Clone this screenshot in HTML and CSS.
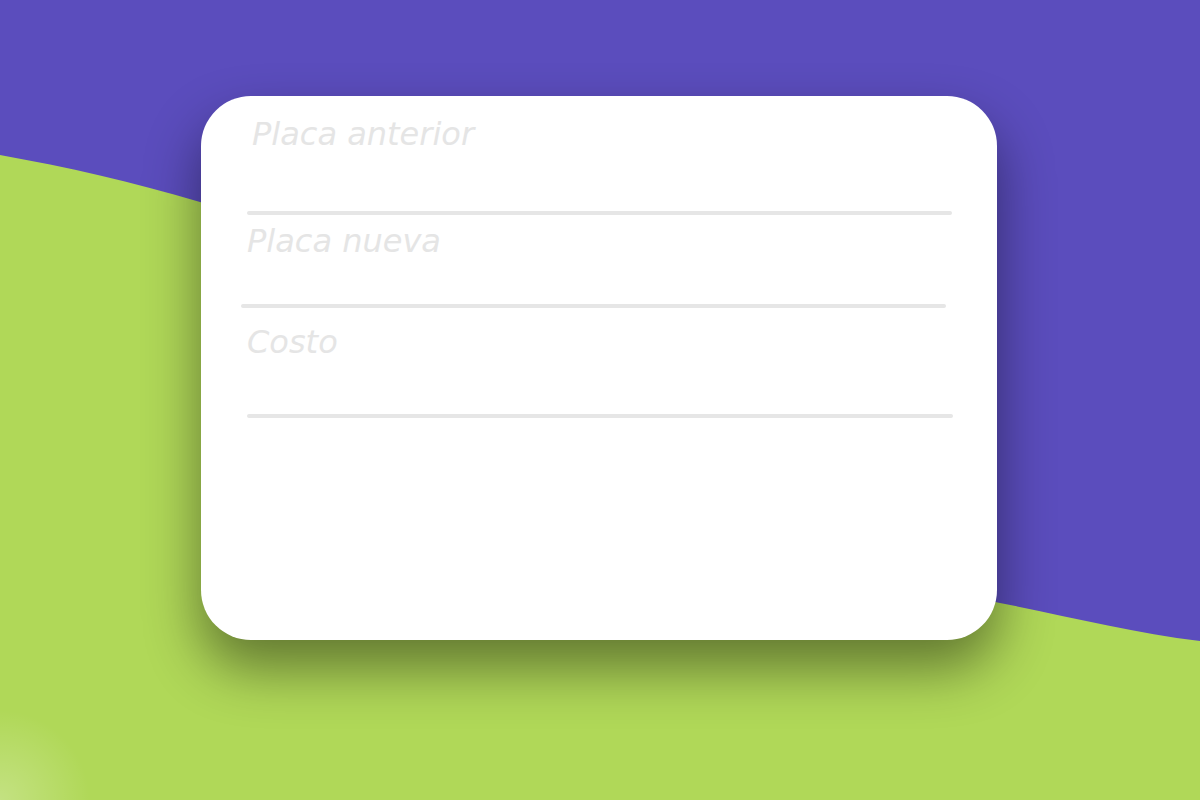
FILE: index.html
```html
<!DOCTYPE html>
<html lang="es">
<head>
<meta charset="utf-8">
<title>Placa</title>
<link rel="stylesheet" href="styles.css">
</head>
<body>
<svg class="backdrop" viewBox="0 0 1200 800" preserveAspectRatio="none" aria-hidden="true">
  <defs>
    <radialGradient id="glow" cx="0" cy="800" r="90" gradientUnits="userSpaceOnUse">
      <stop offset="0" stop-color="#ffffff" stop-opacity="0.25"/>
      <stop offset="1" stop-color="#ffffff" stop-opacity="0"/>
    </radialGradient>
  </defs>
  <rect x="0" y="0" width="1200" height="800" fill="#5b4dbd"/>
  <path d="M0,155 C67,167 133,182 200,202 C400,262 800,565 1000,603 C1067,616 1133,633 1200,641 L1200,800 L0,800 Z" fill="#b0d858"/>
  <rect x="0" y="680" width="140" height="120" fill="url(#glow)"/>
</svg>
<main class="page">
  <form class="card">
    <div class="field field-1">
      <span class="placeholder">Placa anterior</span>
      <div class="rule"></div>
    </div>
    <div class="field field-2">
      <span class="placeholder">Placa nueva</span>
      <div class="rule"></div>
    </div>
    <div class="field field-3">
      <span class="placeholder">Costo</span>
      <div class="rule"></div>
    </div>
  </form>
</main>
</body>
</html>
```
FILE: styles.css
```css
html, body {
  margin: 0;
  padding: 0;
  width: 1200px;
  height: 800px;
  overflow: hidden;
}

body {
  position: relative;
  font-family: "DejaVu Sans", "Liberation Sans", sans-serif;
}

.backdrop {
  position: absolute;
  left: 0;
  top: 0;
  width: 1200px;
  height: 800px;
  display: block;
  z-index: 0;
}

.page {
  position: relative;
  z-index: 1;
  padding: 96px 0 0 201px;
}

.card {
  width: 796px;
  height: 544px;
  box-sizing: border-box;
  background: #ffffff;
  border-radius: 50px;
  box-shadow: 0 28px 55px rgba(0, 0, 0, 0.45);
  padding: 19px 0 0 46px;
  display: flex;
  flex-direction: column;
}

.field {
  display: flex;
  flex-direction: column;
  align-items: flex-start;
}

.placeholder {
  font-size: 32px;
  line-height: 38px;
  font-style: italic;
  color: #e5e5e5;
  display: block;
}

.rule {
  height: 4px;
  width: 705px;
  border-radius: 2px;
  background: #e6e6e6;
}

.field-1 .placeholder {
  margin-left: 5px;
}

.field-1 .rule {
  margin-top: 58px;
}

.field-2 {
  margin-top: 7px;
}

.field-2 .rule {
  margin-top: 44px;
  margin-left: -6px;
}

.field-3 {
  margin-top: 15px;
}

.field-3 .rule {
  margin-top: 53px;
  width: 706px;
}
```
